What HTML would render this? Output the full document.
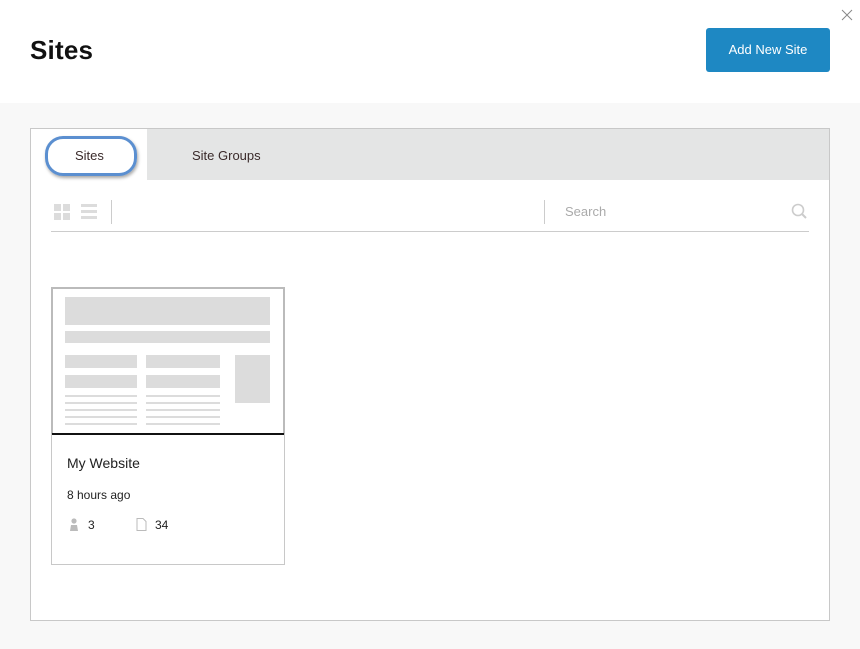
<!DOCTYPE html><html><head><style>
body{margin:0;width:860px;height:649px;background:#f8f8f8;font-family:"Liberation Sans",sans-serif;position:relative;overflow:hidden}
.a{position:absolute}
.g{position:absolute;background:#dcdcdc}
</style></head><body>
<div class="a" style="left:0;top:0;width:860px;height:103px;background:#fff"></div>
<div class="a" style="left:30px;top:35px;font-size:26px;font-weight:bold;color:#111;letter-spacing:0.2px">Sites</div>
<div class="a" style="left:706px;top:28px;width:124px;height:44px;background:#1e88c3;border-radius:3px;color:#fff;font-size:13px;line-height:44px;text-align:center">Add New Site</div>
<svg class="a" style="left:841px;top:9px" width="12" height="12"><path d="M1 1L11 11M11 1L1 11" stroke="#888" stroke-width="1"/></svg>
<div class="a" style="left:30px;top:128px;width:798px;height:491px;background:#fff;border:1px solid #c8c8c8"></div>
<div class="a" style="left:31px;top:129px;width:798px;height:51px;background:#e4e5e5"></div>
<div class="a" style="left:31px;top:129px;width:116px;height:51px;background:#fff"></div>
<div class="a" style="left:45px;top:136px;width:86px;height:34px;border:3px solid #5b8fd0;border-radius:18px;box-shadow:1px 2px 3px rgba(0,0,0,.35)"></div>
<div class="a" style="left:75px;top:148px;font-size:13px;color:#3a2a2a">Sites</div>
<div class="a" style="left:192px;top:148px;font-size:13px;color:#3a2a2a">Site Groups</div>
<div class="g" style="left:54px;top:204px;width:7px;height:7px"></div><div class="g" style="left:63px;top:204px;width:7px;height:7px"></div>
<div class="g" style="left:54px;top:213px;width:7px;height:7px"></div><div class="g" style="left:63px;top:213px;width:7px;height:7px"></div>
<div class="g" style="left:81px;top:204px;width:16px;height:3px"></div><div class="g" style="left:81px;top:210px;width:16px;height:3px"></div><div class="g" style="left:81px;top:216px;width:16px;height:3px"></div>
<div class="a" style="left:111px;top:200px;width:1px;height:24px;background:#ccc"></div>
<div class="a" style="left:544px;top:200px;width:1px;height:24px;background:#ccc"></div>
<div class="a" style="left:565px;top:204px;font-size:13px;color:#aaa">Search</div>
<svg class="a" style="left:791px;top:203px" width="17" height="17"><circle cx="7" cy="7" r="5.5" fill="none" stroke="#ccc" stroke-width="1.6"/><path d="M11 11L15 15" stroke="#ccc" stroke-width="2"/></svg>
<div class="a" style="left:51px;top:231px;width:758px;height:1px;background:#ccc"></div>
<div class="a" style="left:51px;top:287px;width:232px;height:276px;background:#fff;border:1px solid #c8c8c8"></div>
<div class="a" style="left:51px;top:287px;width:230px;height:145px;border:2px solid #bbb;border-bottom:none"></div>
<div class="a" style="left:52px;top:433px;width:232px;height:2px;background:#111"></div>
<div class="g" style="left:65px;top:297px;width:205px;height:28px"></div>
<div class="g" style="left:65px;top:331px;width:205px;height:12px"></div>
<div class="g" style="left:65px;top:355px;width:72px;height:13px"></div><div class="g" style="left:146px;top:355px;width:74px;height:13px"></div>
<div class="g" style="left:65px;top:375px;width:72px;height:13px"></div><div class="g" style="left:146px;top:375px;width:74px;height:13px"></div>
<div class="g" style="left:235px;top:355px;width:35px;height:48px"></div>
<div class="g" style="left:65px;top:395px;width:72px;height:2px"></div><div class="g" style="left:146px;top:395px;width:74px;height:2px"></div>
<div class="g" style="left:65px;top:402px;width:72px;height:2px"></div><div class="g" style="left:146px;top:402px;width:74px;height:2px"></div>
<div class="g" style="left:65px;top:409px;width:72px;height:2px"></div><div class="g" style="left:146px;top:409px;width:74px;height:2px"></div>
<div class="g" style="left:65px;top:416px;width:72px;height:2px"></div><div class="g" style="left:146px;top:416px;width:74px;height:2px"></div>
<div class="g" style="left:65px;top:423px;width:72px;height:2px"></div><div class="g" style="left:146px;top:423px;width:74px;height:2px"></div>
<div class="a" style="left:67px;top:455px;font-size:14px;color:#222">My Website</div>
<div class="a" style="left:67px;top:488px;font-size:12px;color:#222">8 hours ago</div>
<svg class="a" style="left:69px;top:518px" width="10" height="13"><circle cx="5" cy="3" r="2.6" fill="#bbb"/><path d="M1 13L2 7H8L9 13Z" fill="#bbb"/></svg>
<div class="a" style="left:88px;top:518px;font-size:12px;color:#222">3</div>
<svg class="a" style="left:136px;top:518px" width="11" height="13"><path d="M1 .5H7L10 3.5V12.5H1Z" fill="none" stroke="#bbb"/></svg>
<div class="a" style="left:155px;top:518px;font-size:12px;color:#222">34</div>
</body></html>
